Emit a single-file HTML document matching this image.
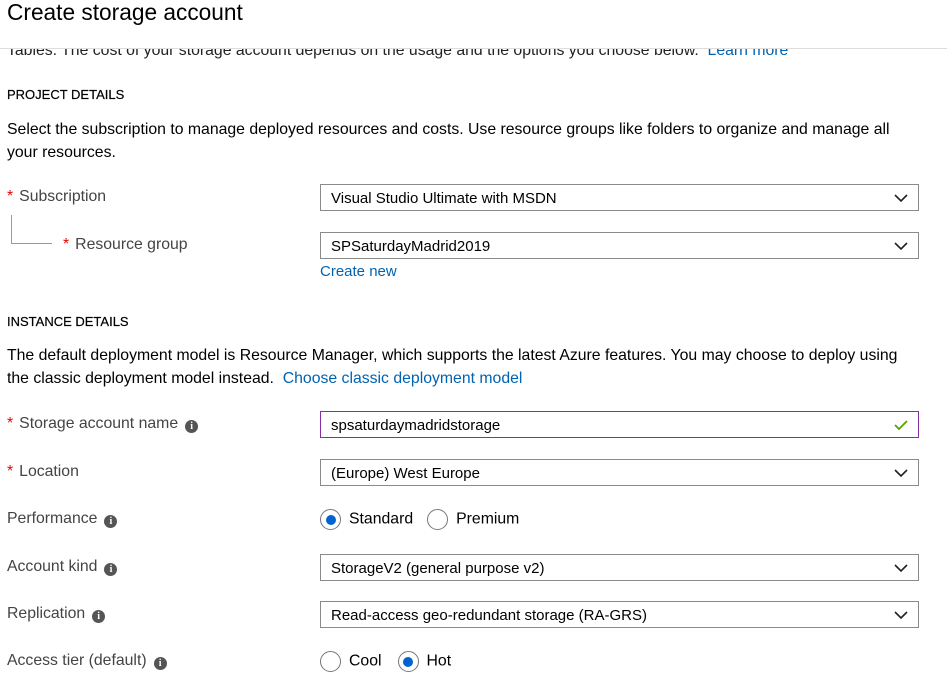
<!DOCTYPE html>
<html><head><style>
body{margin:0;width:947px;height:684px;overflow:hidden;background:#fff;font-family:"Liberation Sans",sans-serif;color:#000;position:relative}
.a{position:absolute;white-space:nowrap}
.t{font-size:15.8px}
.lbl{font-size:15.8px;color:#444}
.req{color:#e00;margin-right:6px}
.box{position:absolute;left:320px;height:25px;border:1px solid #8a8a8a;font-size:15px;line-height:27px;padding-left:10px;width:587px}
.chev{position:absolute;right:10px;top:9px}
.i{display:inline-block;width:13px;height:13px;border-radius:50%;background:#555;color:#fff;font-size:10px;line-height:13px;text-align:center;font-weight:bold;margin-left:7px;vertical-align:-1px;font-family:"Liberation Serif",serif}
.r{display:inline-block;width:21px;height:21px;border:1px solid #777;border-radius:50%;box-sizing:border-box;vertical-align:middle;position:relative;margin-right:8px}
.r.on::after{content:"";position:absolute;left:4.5px;top:4.5px;width:10px;height:10px;border-radius:50%;background:#0063cf}
a{color:#0063b1;text-decoration:none}
.h{font-size:13px;-webkit-text-stroke:0.2px #000}
</style></head><body>
<div class="a" style="left:7px;top:-1px;font-size:22.7px;">Create storage account</div>
<div class="a t" style="left:7px;top:42px;clip-path:inset(7px 0 0 0);color:#222">Tables. The cost of your storage account depends on the usage and the options you choose below. &nbsp;<a>Learn more</a></div>
<div style="position:absolute;left:0;top:48px;width:947px;height:1px;background:#ddd"></div>
<div class="a h" style="left:7px;top:87px;">PROJECT DETAILS</div>
<div class="a t" style="left:7px;top:118px;line-height:23px">Select the subscription to manage deployed resources and costs. Use resource groups like folders to organize and manage all<br>your resources.</div>
<div class="a lbl" style="left:7px;top:188px"><span class="req">*</span>Subscription</div>
<div style="position:absolute;left:11px;top:215px;width:40px;height:28px;border-left:1px solid #999;border-bottom:1px solid #999"></div>
<div class="a lbl" style="left:63px;top:236px"><span class="req">*</span>Resource group</div>
<div class="box" style="top:184px">Visual Studio Ultimate with MSDN<svg class="chev" width="14" height="9"><path d="M1 1l6 6 6-6" fill="none" stroke="#222" stroke-width="1.6"/></svg></div>
<div class="box" style="top:232px">SPSaturdayMadrid2019<svg class="chev" width="14" height="9"><path d="M1 1l6 6 6-6" fill="none" stroke="#222" stroke-width="1.6"/></svg></div>
<div class="a" style="left:320px;top:263px;font-size:15px"><a>Create new</a></div>
<div class="a h" style="left:7px;top:314px;">INSTANCE DETAILS</div>
<div class="a t" style="left:7px;top:344px;line-height:23px">The default deployment model is Resource Manager, which supports the latest Azure features. You may choose to deploy using<br>the classic deployment model instead. &nbsp;<a>Choose classic deployment model</a></div>
<div class="a lbl" style="left:7px;top:415px"><span class="req">*</span>Storage account name<span class="i">i</span></div>
<div class="box" style="top:411px;border-color:#8a2da5">spsaturdaymadridstorage<svg class="chev" style="top:8px" width="14" height="11"><path d="M1 5l4 4 8-8" fill="none" stroke="#57a300" stroke-width="1.8"/></svg></div>
<div class="a lbl" style="left:7px;top:463px"><span class="req">*</span>Location</div>
<div class="box" style="top:459px">(Europe) West Europe<svg class="chev" width="14" height="9"><path d="M1 1l6 6 6-6" fill="none" stroke="#222" stroke-width="1.6"/></svg></div>
<div class="a lbl" style="left:7px;top:510px">Performance<span class="i">i</span></div>
<div class="a t" style="left:320px;top:509px"><span class="r on"></span>Standard<span style="display:inline-block;width:14px"></span><span class="r"></span>Premium</div>
<div class="a lbl" style="left:7px;top:558px">Account kind<span class="i">i</span></div>
<div class="box" style="top:554px">StorageV2 (general purpose v2)<svg class="chev" width="14" height="9"><path d="M1 1l6 6 6-6" fill="none" stroke="#222" stroke-width="1.6"/></svg></div>
<div class="a lbl" style="left:7px;top:605px">Replication<span class="i">i</span></div>
<div class="box" style="top:601px">Read-access geo-redundant storage (RA-GRS)<svg class="chev" width="14" height="9"><path d="M1 1l6 6 6-6" fill="none" stroke="#222" stroke-width="1.6"/></svg></div>
<div class="a lbl" style="left:7px;top:652px">Access tier (default)<span class="i">i</span></div>
<div class="a t" style="left:320px;top:651px"><span class="r"></span>Cool<span style="display:inline-block;width:16px"></span><span class="r on"></span>Hot</div>
</body></html>
